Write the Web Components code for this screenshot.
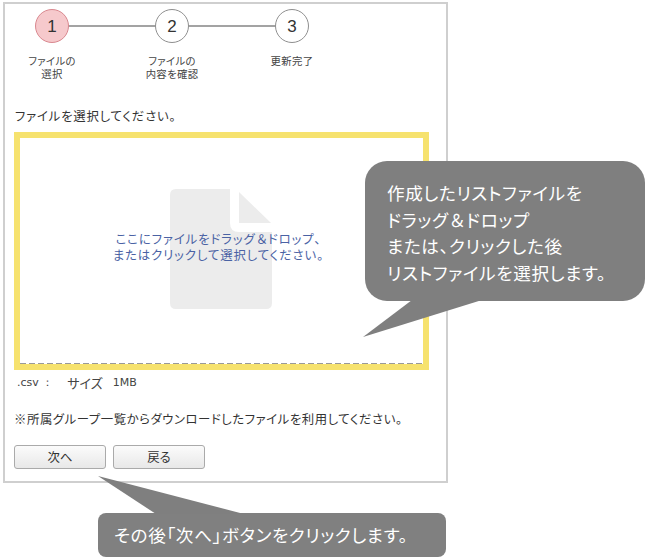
<!DOCTYPE html>
<html lang="ja"><head><meta charset="utf-8">
<style>
html,body{margin:0;padding:0;background:#fff}
body{width:650px;height:558px;overflow:hidden;font-family:"Noto Sans CJK JP","Noto Sans",sans-serif;font-feature-settings:"palt"}
.w{font-feature-settings:normal;letter-spacing:0}
</style></head><body>
<guide-screen>
  <upload-panel>
    <step-bar slot="steps">
      <step-item n="1" active>ファイルの<br>選択</step-item>
      <step-item n="2">ファイルの<br>内容を確認</step-item>
      <step-item n="3" last>更新完了</step-item>
    </step-bar>
    <p-line slot="lead" style="letter-spacing:.8px;margin-left:1px">ファイルを選択してください。</p-line>
    <drop-zone slot="zone">ここにファイルをドラッグ<span class="w">＆</span>ドロップ、<br>またはクリックして選択してください。</drop-zone>
    <file-meta slot="meta"></file-meta>
    <p-line slot="note" style="letter-spacing:.55px">※所属グループ一覧からダウンロードしたファイルを利用してください。</p-line>
    <ui-button slot="actions">次へ</ui-button>
    <ui-button slot="actions">戻る</ui-button>
  </upload-panel>
  <call-out slot="over" kind="right">作成したリストファイルを<br>ドラッグ<span class="w">＆</span>ドロップ<br>または、クリックした後<br>リストファイルを選択します。</call-out>
  <call-out slot="over" kind="bottom">その後「次へ」ボタンをクリックします。</call-out>
</guide-screen>
<script>
function def(name,html,extra){
  const t=document.createElement('template');t.innerHTML=html;
  customElements.define(name,class extends HTMLElement{
    connectedCallback(){ if(this.shadowRoot)return;
      const r=this.attachShadow({mode:'open'});r.appendChild(t.content.cloneNode(true));
      if(extra)extra(this,r);}
  });
}
def('guide-screen',`<style>:host{display:block;position:relative;width:650px;height:558px;padding:2px 0 0 3px;box-sizing:border-box}</style><slot></slot><slot name="over"></slot>`);
def('upload-panel',`<style>
:host{display:flex;flex-direction:column;width:445px;height:481px;box-sizing:border-box;border:2px solid #cfcfcf;background:#fff;padding:0 16px 0 9px;color:#333}
.acts{display:flex;gap:7px;margin-top:17px}
::slotted([slot=lead]){margin-top:14px}
::slotted([slot=note]){margin-top:16px}
</style><slot name="steps"></slot><slot name="lead"></slot><slot name="zone"></slot><slot name="meta"></slot><slot name="note"></slot><div class="acts"><slot name="actions"></slot></div>`);
def('step-bar',`<style>:host{display:flex;height:89px;padding-top:5px;box-sizing:border-box;margin-left:9px}</style><slot></slot>`);
def('step-item',`<style>
:host{display:flex;flex-direction:column;align-items:center;width:120px;flex:none;position:relative;margin-left:-31px;margin-right:31px}
.c{width:34px;height:34px;box-sizing:border-box;border-radius:50%;border:1.5px solid #8f8f8f;background:#fff;display:flex;align-items:center;justify-content:center;font:17px/1 "Liberation Sans",sans-serif;color:#333;position:relative;z-index:1}
:host([active]) .c{background:#f6c9cc;border-color:#d9888f}
.l{position:absolute;left:60px;top:16px;width:120px;height:2px;background:#a3a3a3}
:host([last]) .l{display:none}
.t{margin-top:11px;font-size:10.4px;letter-spacing:.3px;line-height:13px;text-align:center;color:#444}
</style><div class="l"></div><div class="c"></div><div class="t"><slot></slot></div>`,(h,r)=>{r.querySelector('.c').textContent=h.getAttribute('n')});
def('p-line',`<style>:host{display:block;font-size:12.4px;line-height:18px;color:#333;white-space:nowrap}</style><slot></slot>`);
def('drop-zone',`<style>
:host{display:block;position:relative;margin-top:7px;width:415px;height:238px;box-sizing:border-box;border:6px solid #f6e26e;background:#fff}
.in{position:absolute;left:0;right:0;top:0;bottom:0;display:flex;align-items:center;justify-content:center}
.d{position:absolute;left:0;right:0;bottom:0;height:1px;background:repeating-linear-gradient(90deg,#999 0 6px,transparent 6px 9px)}
svg{position:absolute;left:150px;top:51px}
.t{position:relative;font-size:12.4px;line-height:16px;letter-spacing:.9px;color:#4a62a4;text-align:center;margin:-9px 6px 0 0;white-space:nowrap}
</style><div class="in"><div class="d"></div><svg width="102" height="120" viewBox="0 0 102 120"><path fill="#ececec" d="M6 0H60V34Q60 43 69 43H102V114Q102 120 96 120H6Q0 120 0 114V6Q0 0 6 0Z"/><path fill="#ececec" d="M69 3L101 34H69Z"/></svg><div class="t"><slot></slot></div></div>`);
def('file-meta',`<style>:host{display:flex;align-items:center;height:24px;padding-left:3px;font-size:13px;color:#444;white-space:pre}
.m{font-family:"DejaVu Sans",sans-serif;font-size:11px}</style><span class="m">.csv ：</span><span style="margin-left:14px">サイズ</span><span class="m" style="margin-left:10px">1MB</span>`);
def('ui-button',`<style>:host{display:flex;align-items:center;justify-content:center;width:92px;height:24px;box-sizing:border-box;border:1px solid #aaa;border-radius:3px;background:linear-gradient(#fbfbfb,#e8e8e8);font-size:12.4px;color:#333}</style><slot></slot>`);
def('call-out',`<style>
:host{position:absolute;display:block;color:#fff;background:#7f7f7f;box-sizing:border-box;white-space:nowrap;letter-spacing:.65px}
:host([kind=right]){left:365px;top:161px;width:280px;height:140px;border-radius:22px;padding:19px 0 0 22px;font-size:17.6px;line-height:26.5px}
:host([kind=bottom]){left:98px;top:513px;width:348px;height:44px;border-radius:8px;padding:9px 0 0 16px;font-size:17.6px;line-height:26px;background:#808080}
svg{position:absolute;overflow:visible}
</style><svg width="1" height="1"></svg><slot></slot>`,(h,r)=>{
  const s=r.querySelector('svg');const k=h.getAttribute('kind');
  const NS='http://www.w3.org/2000/svg';const p=document.createElementNS(NS,'polygon');p.setAttribute('fill','#7f7f7f');
  if(k==='right'){s.style.left='0';s.style.top='0';p.setAttribute('points','47,139 117,139 -2,176');}
  else{s.style.left='0';s.style.top='0';p.setAttribute('points','58,1 146,1 0,-37');}
  s.appendChild(p);
});
</script>
</body></html>
